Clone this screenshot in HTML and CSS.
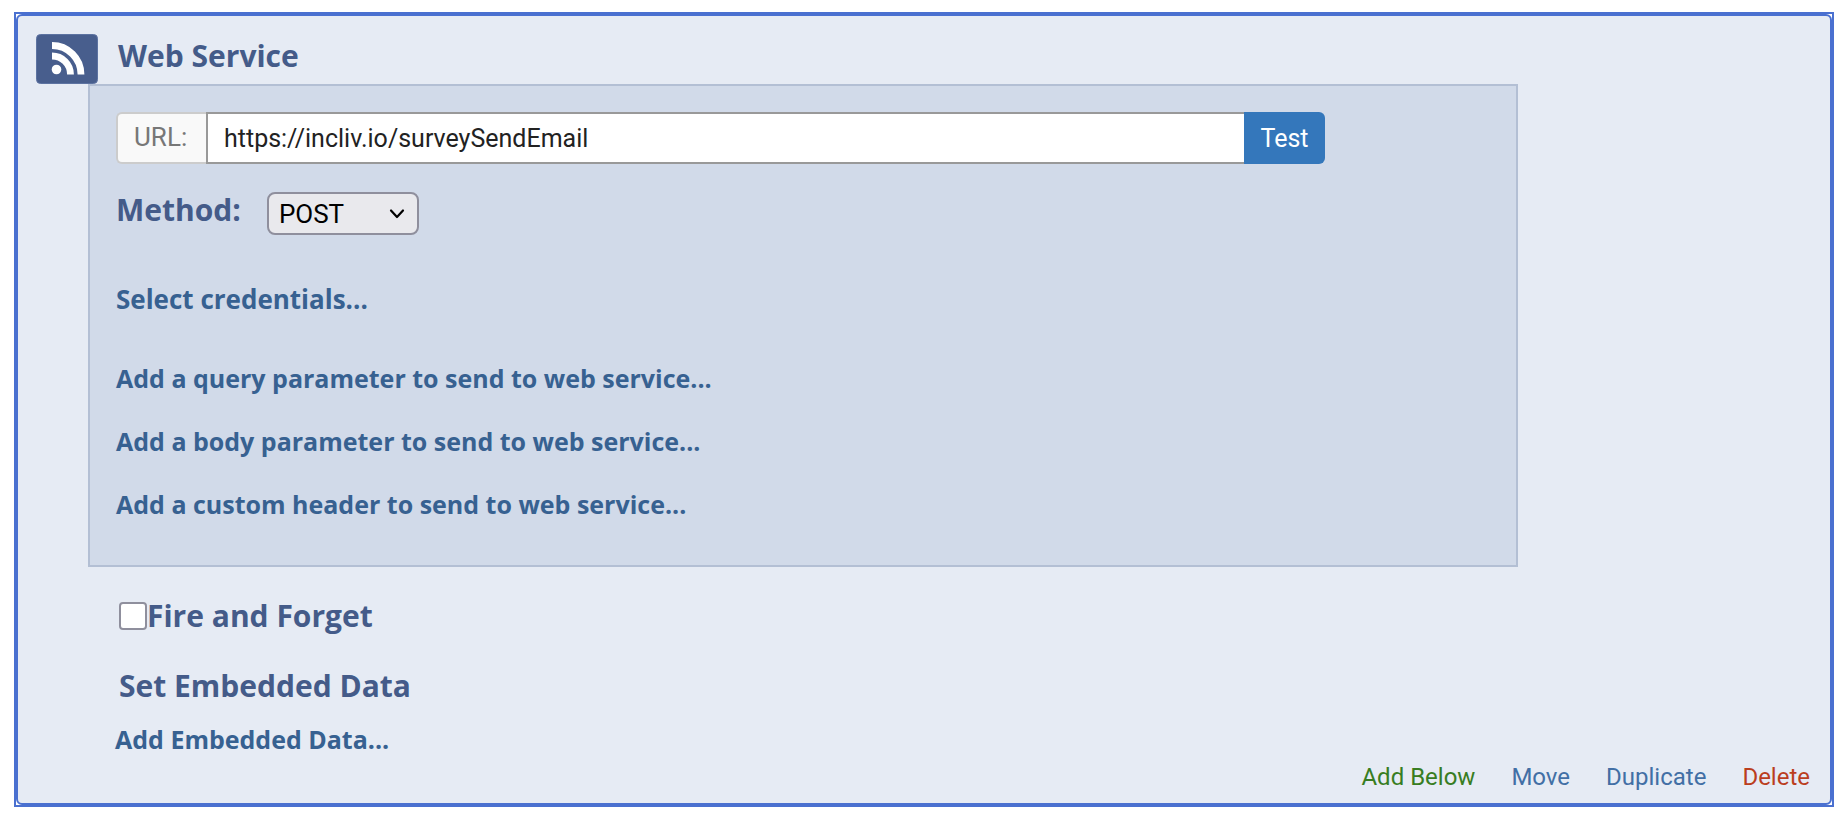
FILE: index.html
```html
<!DOCTYPE html>
<html lang="en">
<head>
<meta charset="utf-8">
<title>Web Service</title>
<link rel="stylesheet" href="styles.css">
</head>
<body>
<main class="frame">
  <section class="element">
    <header class="element-header">
      <svg class="feed-icon" viewBox="0 0 62 50" aria-hidden="true">
        <rect x="0.5" y="0.5" width="61" height="49" rx="4" fill="#485e8d" stroke="#5d73a1"/>
        <circle cx="20.500" cy="35.500" r="4.800" fill="#fff"/>
        <path d="M16 22A18.500 18.500 0 0 1 34.500 40.500M16 11.500A29 29 0 0 1 45 40.500" fill="none" stroke="#fff" stroke-width="6.800"/>
      </svg>
      <h1 class="heading">Web Service</h1>
    </header>
    <div class="panel">
      <div class="url-group">
        <label class="url-label" for="url">URL:</label>
        <input class="url-input" id="url" type="text" value="https://incliv.io/surveySendEmail">
        <button class="test-button" type="button">Test</button>
      </div>
      <div class="method-row">
        <label class="heading" for="method">Method:</label>
        <span class="select-wrap">
          <select class="method-select" id="method"><option>POST</option><option>GET</option></select>
          <svg class="chevron" viewBox="0 0 16 12" aria-hidden="true"><path d="M2 2.500L8 9L14 2.500" fill="none" stroke="#000" stroke-width="2.200" stroke-linecap="round" stroke-linejoin="round"/></svg>
        </span>
      </div>
      <a class="action credentials" href="#">Select credentials...</a>
      <div class="parameter-links">
        <a class="action" href="#">Add a query parameter to send to web service...</a>
        <a class="action" href="#">Add a body parameter to send to web service...</a>
        <a class="action" href="#">Add a custom header to send to web service...</a>
      </div>
    </div>
    <div class="options">
      <div class="fire-row">
        <input class="checkbox" id="fire" type="checkbox">
        <label class="heading" for="fire">Fire and Forget</label>
      </div>
      <h2 class="heading">Set Embedded Data</h2>
    </div>
    <div class="embedded-link"><a class="action" href="#">Add Embedded Data...</a></div>
    <footer class="element-footer">
      <a class="footer-link add" href="#">Add Below</a>
      <a class="footer-link" href="#">Move</a>
      <a class="footer-link" href="#">Duplicate</a>
      <a class="footer-link delete" href="#">Delete</a>
    </footer>
  </section>
</main>
</body>
</html>
```
FILE: styles.css
```css
* { box-sizing: border-box; }
body { margin: 0; padding: 12px 12px 6px 14px; background: #fff; font-family: Roboto, "Liberation Sans", sans-serif; }
a { text-decoration: none; }
.frame { border: 2px solid #4a70d0; background: #fff; }
.element { border: 2px solid #4a70d0; border-radius: 6px; background: #e6ebf4; padding: 18px 20px 12px 18px; }
.element-header { display: flex; gap: 20px; }
.feed-icon { width: 62px; height: 50px; flex: none; }
.heading { margin: 0; font-family: "Open Sans", sans-serif; font-size: 30px; line-height: 36px; font-weight: 700; color: #445b89; }
.element-header .heading { padding-top: 4px; }
.panel { width: 80.6%; min-width: 700px; margin-left: 52px; padding: 26px 26px 45px; border: 2px solid #b3bfd4; background: #d1dae9; display: flex; flex-direction: column; align-items: flex-start; }
.url-group { display: flex; width: 88%; height: 52px; font-size: 26px; }
.url-label { width: 90px; padding: 0 16px; border: 2px solid #ccc; border-right: 0; border-radius: 6px 0 0 6px; background: #f9f9f9; color: #777; line-height: 46px; }
.url-input { flex: 1; min-width: 0; padding: 0 16px; border: 2px solid #999; border-right: 0; border-radius: 0; background: #fff; color: #222; font: inherit; font-size: 25px; }
.test-button { width: 81px; padding: 0; border: 0; border-radius: 0 6px 6px 0; background: #3477bb; color: #fff; font: inherit; font-size: 25px; }
.method-row { display: flex; gap: 26px; margin: 28px 0 48px; }
.select-wrap { position: relative; display: flex; }
.method-select { appearance: none; width: 152px; height: 43px; padding: 0 10px; border: 2px solid #8f8f9d; border-radius: 8px; background: #e9e9ed; color: #000; font: inherit; font-size: 26px; }
.chevron { position: absolute; right: 14px; top: 16px; width: 16px; height: 12px; pointer-events: none; }
.action { font-family: "Open Sans", sans-serif; font-size: 25px; line-height: 32px; font-weight: 700; color: #376191; }
.credentials { font-size: 26px; }
.parameter-links { display: flex; flex-direction: column; gap: 31px; margin-top: 47px; }
.options { padding: 31px 0 0 83px; display: flex; flex-direction: column; gap: 34px; }
.fire-row { display: flex; align-items: center; }
.checkbox { appearance: none; width: 28px; height: 28px; margin: 0; border: 2px solid #8f8f9d; border-radius: 4px; background: #fff; }
.embedded-link { display: flex; padding: 19px 0 0 79px; }
.element-footer { display: flex; justify-content: flex-end; gap: 36px; margin-top: 8px; }
.footer-link { font-size: 24px; line-height: 28px; color: #426fa5; }
.add { color: #387d22; }
.delete { color: #bb3e1e; }
```
